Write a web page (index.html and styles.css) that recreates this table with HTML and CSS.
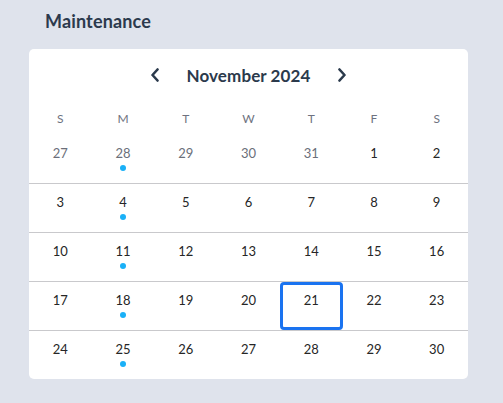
FILE: index.html
```html
<!DOCTYPE html>
<html>
<head>
<meta charset="utf-8">
<link rel="stylesheet" href="styles.css">
</head>
<body>
<div class="page">
  <h1 class="title">Maintenance</h1>
  <div class="card">
    <div class="cal-head">
      <button class="nav" aria-label="Previous month">
        <svg width="10" height="14" viewBox="0 0 10 14"><path d="M7.5 1.5 L2.5 7 L7.5 12.5" fill="none" stroke="#2b3a4c" stroke-width="2.6" stroke-linecap="round" stroke-linejoin="round"/></svg>
      </button>
      <span class="month">November 2024</span>
      <button class="nav" aria-label="Next month">
        <svg width="10" height="14" viewBox="0 0 10 14"><path d="M2.5 1.5 L7.5 7 L2.5 12.5" fill="none" stroke="#2b3a4c" stroke-width="2.6" stroke-linecap="round" stroke-linejoin="round"/></svg>
      </button>
    </div>
    <div class="weekdays">
      <span>S</span><span>M</span><span>T</span><span>W</span><span>T</span><span>F</span><span>S</span>
    </div>
    <div class="week first">
      <div class="day muted">27</div>
      <div class="day muted dot">28</div>
      <div class="day muted">29</div>
      <div class="day muted">30</div>
      <div class="day muted">31</div>
      <div class="day">1</div>
      <div class="day">2</div>
    </div>
    <div class="week">
      <div class="day">3</div>
      <div class="day dot">4</div>
      <div class="day">5</div>
      <div class="day">6</div>
      <div class="day">7</div>
      <div class="day">8</div>
      <div class="day">9</div>
    </div>
    <div class="week">
      <div class="day">10</div>
      <div class="day dot">11</div>
      <div class="day">12</div>
      <div class="day">13</div>
      <div class="day">14</div>
      <div class="day">15</div>
      <div class="day">16</div>
    </div>
    <div class="week">
      <div class="day">17</div>
      <div class="day dot">18</div>
      <div class="day">19</div>
      <div class="day">20</div>
      <div class="day selected">21</div>
      <div class="day">22</div>
      <div class="day">23</div>
    </div>
    <div class="week last">
      <div class="day">24</div>
      <div class="day dot">25</div>
      <div class="day">26</div>
      <div class="day">27</div>
      <div class="day">28</div>
      <div class="day">29</div>
      <div class="day">30</div>
    </div>
  </div>
</div>
</body>
</html>
```
FILE: styles.css
```css
html, body {
  margin: 0;
  padding: 0;
  background: #dfe3ec;
  font-family: Lato, "Noto Sans", sans-serif;
}
.page {
  padding: 9px 35px 0 29px;
  width: 439px;
}
.title {
  margin: 0 0 16px 16px;
  font-size: 18px;
  font-weight: 700;
  color: #2c3a4d;
  line-height: 24px;
  letter-spacing: 0.15px;
}
.card {
  background: #fff;
  border-radius: 5px;
  width: 439px;
  overflow: hidden;
}
.cal-head {
  height: 52px;
  display: flex;
  align-items: center;
  justify-content: center;
  gap: 27px;
}
.nav {
  border: 0;
  background: none;
  padding: 0;
  display: flex;
  align-items: center;
  cursor: pointer;
}
.month {
  font-size: 17px;
  font-weight: 700;
  color: #2b3a4c;
  letter-spacing: 0.1px;
}
.weekdays {
  height: 34px;
  display: grid;
  grid-template-columns: repeat(7, 1fr);
  align-items: center;
  text-align: center;
  font-size: 12px;
  color: #6e7280;
  font-weight: 400;
}
.week {
  display: grid;
  grid-template-columns: repeat(7, 1fr);
  height: 49px;
  box-sizing: border-box;
  border-bottom: 1px solid #c9c9cc;
}
.week.last {
  border-bottom: 0;
  height: 48px;
}
.day {
  position: relative;
  text-align: center;
  font-size: 13px;
  color: #262626;
  padding-top: 10px;
  line-height: 16px;
  box-sizing: border-box;
}
.day.muted {
  color: #6b6f7a;
}
.day.dot::after {
  content: "";
  position: absolute;
  left: 50%;
  top: 30px;
  width: 6px;
  height: 6px;
  margin-left: -3px;
  border-radius: 50%;
  background: #1ab0f7;
}
.day.selected {
  border: 3px solid #1a73f0;
  border-radius: 4px;
  padding-top: 7px;
}
```
